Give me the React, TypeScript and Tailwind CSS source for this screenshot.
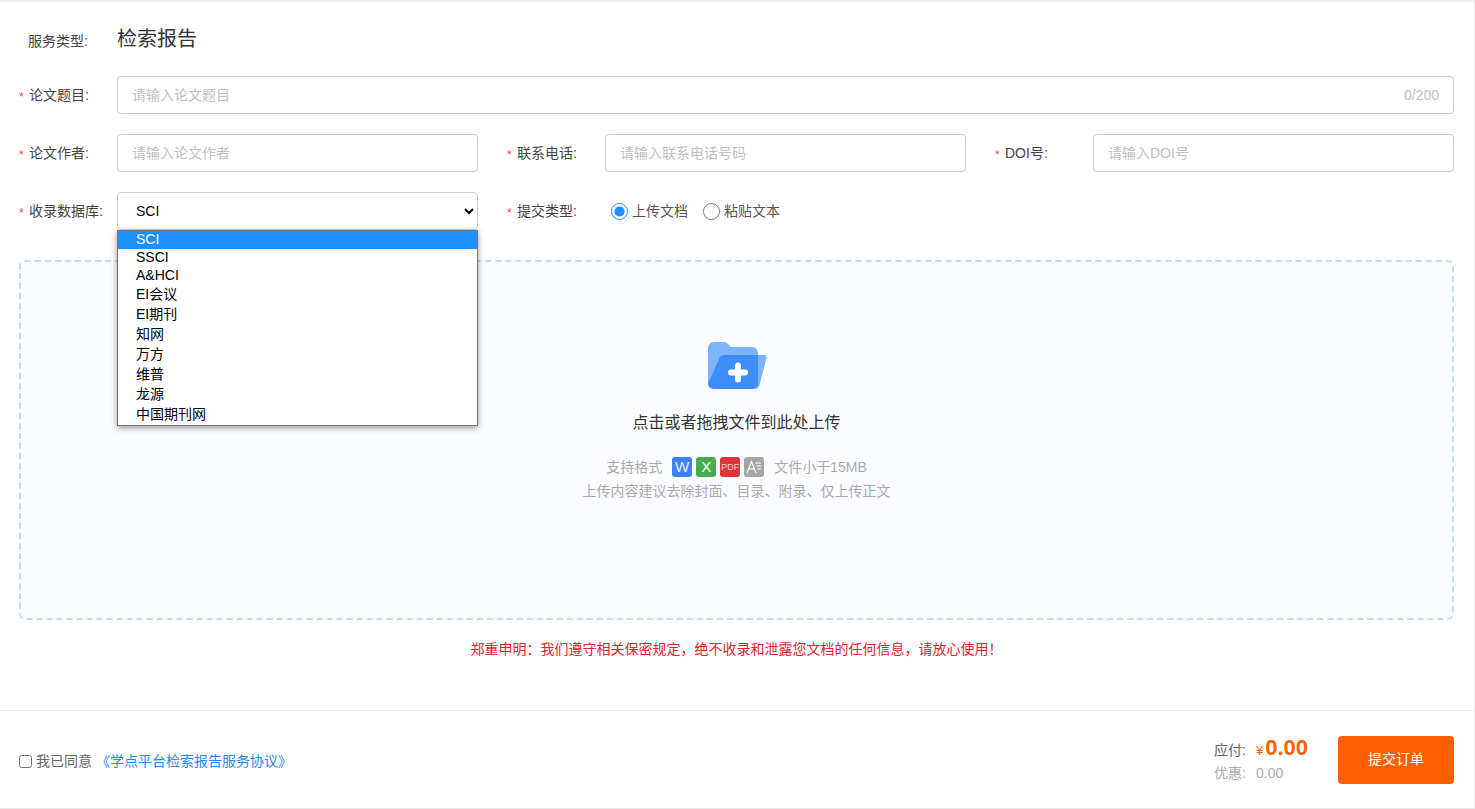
const font = { fontFamily: '"Liberation Sans", "Noto Sans CJK SC", sans-serif' }

const dbOptions = ["SCI", "SSCI", "A&HCI", "EI会议", "EI期刊", "知网", "万方", "维普", "龙源", "中国期刊网"]

function Label({ text }: { text: string }) {
  return (
    <div className="w-[98px] shrink-0 flex items-center text-[14px] text-[#444]">
      <span className="w-[10px] pt-[3px] text-[12px] text-[#f5403f]">*</span>
      <span>{text}</span>
    </div>
  )
}

function TextField({ placeholder }: { placeholder: string }) {
  return (
    <input
      placeholder={placeholder}
      className="w-full h-[38px] px-[14px] text-[14px] border border-[#ccc] rounded-[4px] outline-none placeholder:text-[#bfbfbf]"
    />
  )
}

function FormatBadges() {
  return (
    <div className="flex gap-1 mx-[10px]">
      <span className="w-5 h-5 rounded-[3px] bg-[#3b82f6] text-[#e6f0ff] text-[15px] flex items-center justify-center">W</span>
      <span className="w-5 h-5 rounded-[3px] bg-[#45ad50] text-white text-[15px] flex items-center justify-center">X</span>
      <span className="w-5 h-5 rounded-[3px] bg-[#dd3439] text-[#f9d0d0] text-[9px] flex items-center justify-center">PDF</span>
      <span className="w-5 h-5 rounded-[3px] bg-[#a6a6a6] flex items-center justify-center">
        <svg width="16" height="14" viewBox="0 0 16 14" fill="none" stroke="#fff">
          <path d="M1 13 L5.5 1.5 L10 13 M3 9 H8" strokeWidth="1.1" />
          <path d="M9 3 H15 M10.5 6 H15 M11.5 9 H15" strokeWidth="1" />
        </svg>
      </span>
    </div>
  )
}

function FolderIcon() {
  return (
    <svg width="60" height="48" viewBox="0 0 60 48" className="ml-[2px]">
      <path
        d="M0 6 a6 6 0 0 1 6-6 h9 q3 0 5 2 l3 3 h21 a6 6 0 0 1 6 6 v30 a6 6 0 0 1-6 6 H6 a6 6 0 0 1-6-6 Z"
        fill="#006af7"
        fillOpacity="0.5"
      />
      <path
        d="M17 13 H56 q3 0 2.5 3 l-7 27 q-1 4-5 4 H6 q-5 0-6-4 v-1 L11 17 q1-4 6-4 Z"
        fill="#006af7"
        fillOpacity="0.5"
      />
      <path d="M30 20.5 a3 3 0 0 1 3 3 v4 h4 a3 3 0 0 1 0 6 h-4 v4 a3 3 0 0 1-6 0 v-4 h-4 a3 3 0 0 1 0-6 h4 v-4 a3 3 0 0 1 3-3 Z" fill="#fff" />
    </svg>
  )
}

export default function App() {
  return (
    <div style={font} className="w-[1475px] h-[809px] bg-white overflow-hidden flex flex-col border-t-2 border-r border-[#eee]">
      <div className="flex-1 pl-[19px] pr-5 pt-[18px]">
        <div className="flex items-center h-[38px] mb-[18px]">
          <div className="w-[98px] pl-[9px] text-[14px] text-[#444] pt-[5px]">服务类型:</div>
          <div className="text-[20px] text-[#333]">检索报告</div>
        </div>

        <div className="flex mb-5">
          <Label text="论文题目:" />
          <div className="relative flex-1">
            <TextField placeholder="请输入论文题目" />
            <span className="absolute right-[15px] top-[9px] text-[14px] text-[#bfbfbf]">0/200</span>
          </div>
        </div>

        <div className="grid grid-cols-3 gap-x-[29px] gap-y-5">
          <div className="flex">
            <Label text="论文作者:" />
            <TextField placeholder="请输入论文作者" />
          </div>
          <div className="flex">
            <Label text="联系电话:" />
            <TextField placeholder="请输入联系电话号码" />
          </div>
          <div className="flex">
            <Label text="DOI号:" />
            <TextField placeholder="请输入DOI号" />
          </div>

          <div className="flex">
            <Label text="收录数据库:" />
            <div className="relative w-full">
              <select className="w-full h-[38px] pl-[14px] pr-2 text-[14px] text-black bg-white border border-[#ccc] rounded-[4px] outline-none">
                {dbOptions.map((o) => (
                  <option key={o}>{o}</option>
                ))}
              </select>
              <ul className="absolute left-0 right-0 top-[38px] z-10 bg-white border border-[#767676] shadow-[0_2px_6px_rgba(0,0,0,0.4)] text-[14px] text-black">
                {dbOptions.map((o, i) => (
                  <li
                    key={o}
                    className={
                      (i === 0 ? "bg-[#1e90ff] text-white h-[18px] " : i < 3 ? "h-[18px] " : "h-5 ") +
                      "pl-[18px] pb-[2px] flex items-center"
                    }
                  >
                    {o}
                  </li>
                ))}
              </ul>
            </div>
          </div>
          <div className="flex">
            <Label text="提交类型:" />
            <div className="flex items-center text-[14px] text-[#555] pl-[6px]">
              <label className="flex items-center mr-[15px]">
                <input type="radio" name="kind" defaultChecked className="w-[17px] h-[17px] m-0 mr-1 accent-[#1890ff]" />
                上传文档
              </label>
              <label className="flex items-center">
                <input type="radio" name="kind" className="w-[17px] h-[17px] m-0 mr-1" />
                粘贴文本
              </label>
            </div>
          </div>
        </div>

        <div className="mt-[30px] h-[360px] border-2 border-dashed border-[#bbdcff] rounded-[6px] bg-[#fbfcff] flex flex-col items-center pt-[80px]">
          <FolderIcon />
          <div className="mt-[22px] text-[16px] leading-[22px] text-[#333]">点击或者拖拽文件到此处上传</div>
          <div className="mt-[23px] flex items-center text-[14px] leading-5 text-[#aaa]">
            <span>支持格式</span>
            <FormatBadges />
            <span>文件小于15MB</span>
          </div>
          <div className="mt-[4px] text-[14px] leading-5 text-[#aaa]">上传内容建议去除封面、目录、附录、仅上传正文</div>
        </div>

        <div className="mt-[19px] text-center text-[14px] leading-5 text-[#e8202e]">
          郑重申明：我们遵守相关保密规定，绝不收录和泄露您文档的任何信息，请放心使用！
        </div>
      </div>

      <div className="h-[99px] shrink-0 border-t border-b border-[#e8e8e8] pl-[19px] pr-5 flex items-center justify-between">
        <label className="flex items-center text-[14px] text-[#666] mt-[3px]">
          <input type="checkbox" className="w-[13px] h-[13px] m-0 mr-[4px]" />
          我已同意
          <span className="ml-[4px] text-[#1e88f5]">《学点平台检索报告服务协议》</span>
        </label>
        <div className="flex items-center">
          <div className="w-[124px] pb-[5px] text-[14px]">
            <div className="flex items-baseline h-[26px] text-[#666]">
              <span className="w-[42px]">应付:</span>
              <span className="text-[#ff5f00] text-[13px]">¥</span>
              <span className="text-[#ff5f00] text-[22px] font-bold ml-[2px]">0.00</span>
            </div>
            <div className="flex h-5 items-center text-[#aaa] mt-[6px]">
              <span className="w-[42px]">优惠:</span>
              <span>0.00</span>
            </div>
          </div>
          <button className="w-[116px] h-12 rounded-[4px] bg-[#ff5f00] text-white text-[14px]">提交订单</button>
        </div>
      </div>
    </div>
  )
}
